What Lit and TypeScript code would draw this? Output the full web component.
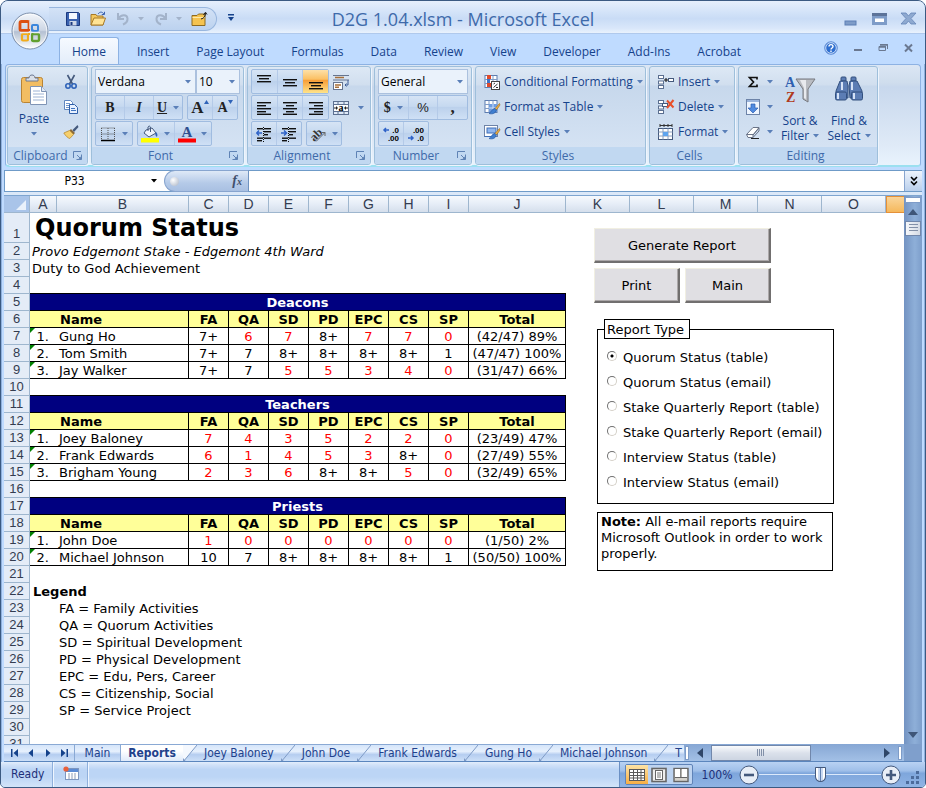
import { LitElement, html, svg, css, nothing, TemplateResult } from "lit";
import { customElement, property, state } from "lit/decorators.js";
import { classMap } from "lit/directives/class-map.js";

/* ---------- icons ---------- */

const lines = (rows: [number, number, number][]) =>
  rows.map(([x, y, w]) => svg`<rect x=${x} y=${y} width=${w} height="1.4" fill="#111"/>`);

const grid = svg`<rect x="1" y="1.500" width="12" height="12" fill="#fff" stroke="#5d7db0"/><path d="M1 5.500h12M1 9.500h12M5 1.500v12M9 1.500v12" stroke="#7f9bc6" fill="none"/>`;
const brush = svg`<path d="M15.500 4.500l-4.500 5 1.500 1.500 3.500-5z" fill="#f0b040" stroke="#9a6a20" stroke-width=".6"/><path d="M11 9.500c-3 0-3 3-6 5 3 1 6.500 0 7.500-3.500z" fill="#3f7fd0" stroke="#1f4f9a" stroke-width=".6"/>`;
const cellStack = svg`<rect x=".5" y="1.500" width="5" height="3" fill="#fff" stroke="#5b6f90"/><rect x=".5" y="7" width="5" height="3" fill="#fff" stroke="#5b6f90"/><rect x=".5" y="11.500" width="5" height="3" fill="#fff" stroke="#5b6f90"/>`;

const ICONS: Record<string, TemplateResult<2>> = {
  save: svg`<path d="M1.500 1.500h12l1 1v12h-13z" fill="#3a62b0" stroke="#1c3a80"/><rect x="4" y="2" width="8" height="6" fill="#f4f8ff"/><rect x="4.500" y="10" width="7" height="4.500" fill="#cfd8e8"/><rect x="5.500" y="11" width="2" height="3" fill="#1c3a80"/>`,
  open: svg`<path d="M1 3.500h5l1 1.500h6v9H1z" fill="#f3c860" stroke="#a87a28"/><path d="M1 14l3-7h11.500L13 14z" fill="#ffe394" stroke="#a87a28"/><path d="M8 3c2-2.500 4-2.500 6 0M14.500 .8V3.500H11.800" stroke="#3a62b0" fill="none"/>`,
  undo: svg`<path d="M3 2v6h6M3.500 7.500C6 3.500 12 3 12.500 7.500c.2 3-2 5-4.500 6" stroke="#a3b3ca" stroke-width="2" fill="none"/>`,
  redo: svg`<path d="M13 2v6H7M12.500 7.500C10 3.500 4 3 3.500 7.500c-.2 3 2 5 4.500 6" stroke="#a3b3ca" stroke-width="2" fill="none"/>`,
  folder: svg`<path d="M1 4.500h5l1.500-1.500H14v11.500H1z" fill="#f5c350" stroke="#8d6a20"/><path d="M1.500 6.500h12" stroke="#fde9a8"/><path d="M10 8c3-.5 4.500-3 4.500-6M12.500 4L14.500 1.200 16 3.500" stroke="#222" fill="none"/>`,
  cut: svg`<path d="M4.500 1l5 9M11.500 1l-5 9" stroke="#44597c" stroke-width="1.600"/><circle cx="5" cy="12" r="2.200" fill="none" stroke="#2f63b8" stroke-width="1.600"/><circle cx="11" cy="12" r="2.200" fill="none" stroke="#2f63b8" stroke-width="1.600"/>`,
  copy: svg`<path d="M1.500 1.500h6l2 2v7h-8z" fill="#fff" stroke="#5f86c0"/><path d="M3 4.500h4M3 6.500h4M3 8.500h3" stroke="#6f95cc"/><path d="M6.500 5.500h5l3 3v6h-8z" fill="#e8f1ff" stroke="#2f5fa8"/><path d="M8 9.500h4M8 11.500h5" stroke="#3f74c0"/>`,
  painter: svg`<path d="M14.500 1L9.500 6l1.500 2 4.500-5z" fill="#44597c"/><path d="M8 5l4 4-1.500 1.500-4-4z" fill="#8a6a3a"/><path d="M6.500 6.500L.8 9c2 3 4 5 6 5.500l3.700-4z" fill="#f6cf6c" stroke="#b98a30" stroke-width=".8"/>`,
  borders: svg`<path d="M1.500 2v12M8 2v12M14.500 2v12M1.500 2h13M1.500 8h13" stroke="#555" stroke-dasharray="1 1" fill="none"/><path d="M1 14.500h14" stroke="#000" stroke-width="1.600"/>`,
  fill: svg`<path d="M4 4l6-2 4 5-7 4-5-4z" fill="#eef3fb" stroke="#44597c"/><path d="M6 5V1c1-1.500 2.500-1 2.500 1V6" stroke="#44597c" fill="none"/><path d="M14 6c2 2 1.500 4 .8 5-1.800-1.500-1.800-3.500-.8-5" fill="#2f63b8"/><rect x="-1" y="12" width="18" height="4.500" fill="#ff0"/>`,
  fontcolor: svg`<text x="8" y="10.500" text-anchor="middle" font-family="Liberation Serif" font-weight="bold" font-size="15" fill="#2f4f8f">A</text><rect x="-1" y="12.500" width="18" height="4" fill="#f00"/>`,
  top: svg`${lines([[1, 1, 14], [3, 4, 10], [1, 7, 14]])}`,
  middle: svg`${lines([[1, 5, 14], [3, 8, 10], [1, 11, 14]])}`,
  bottom: svg`${lines([[1, 8, 14], [3, 11, 10], [1, 14, 14]])}`,
  left: svg`${lines([[1, 2, 14], [1, 5, 9], [1, 8, 14], [1, 11, 9], [1, 13.600, 14]])}`,
  center: svg`${lines([[1, 2, 14], [4, 5, 8], [1, 8, 14], [4, 11, 8], [1, 13.600, 14]])}`,
  right: svg`${lines([[1, 2, 14], [6, 5, 9], [1, 8, 14], [6, 11, 9], [1, 13.600, 14]])}`,
  outdent: svg`${lines([[1, 2, 6], [8, 2, 7], [8, 5, 7], [8, 8, 4], [1, 11.500, 6], [8, 11.500, 7], [1, 14, 5]])}<path d="M7.500 1v15" stroke="#111" stroke-dasharray="1 1"/><path d="M6 7H1M3 4.500L.8 7 3 9.500" stroke="#2f63c8" stroke-width="1.500" fill="none"/>`,
  indent: svg`${lines([[1, 2, 6], [8, 2, 7], [8, 5, 7], [8, 8, 4], [1, 11.500, 6], [8, 11.500, 7], [1, 14, 5]])}<path d="M7.500 1v15" stroke="#111" stroke-dasharray="1 1"/><path d="M0 7h5M3 4.500L5.500 7 3 9.500" stroke="#2f63c8" stroke-width="1.500" fill="none"/>`,
  wrap: svg`<path d="M0 1.500h16" stroke="#66758f"/><path d="M2 3.500h9" stroke="#a8703a" stroke-width="1.400"/><path d="M0 6h16" stroke="#66758f"/><rect x=".5" y="8.500" width="9" height="7" fill="#fff" stroke="#66758f"/><path d="M2 11h6M2 13.300h4" stroke="#a8703a" stroke-width="1.400"/><path d="M15 6v5h-3M13.500 9.500L12 11l1.500 1.500" stroke="#3f5f98" fill="none"/>`,
  merge: svg`<rect x=".5" y="1.500" width="15" height="13" fill="#dfeaf8" stroke="#5d7090"/><path d="M1 4.500h14M1 11.500h14M5 1.500v3M11 1.500v3M5 11.500v3M11 11.500v3" stroke="#5d7090"/><rect x="1" y="5" width="14" height="6" fill="#fff"/><text x="8" y="10.500" text-anchor="middle" font-family="Liberation Serif" font-weight="bold" font-size="10">a</text><path d="M1 8h4M11 8h4M3.500 6.500v3M12.500 6.500v3" stroke="#222"/>`,
  orient: svg`<text x="0" y="12" transform="rotate(-45 7 9)" font-family="Liberation Serif" font-weight="bold" font-size="12" fill="#333">ab</text><path d="M6 15.500l9-9M11.500 6.500H15V10" stroke="#666" fill="none"/>`,
  incdec: svg`<path d="M6 4H1M3 2L1 4l2 2" stroke="#2f63c8" stroke-width="1.500" fill="none"/><text x="16" y="7" text-anchor="end" font-family="Liberation Sans" font-weight="bold" font-size="8">.0</text><text x="16" y="15" text-anchor="end" font-family="Liberation Sans" font-weight="bold" font-size="8">.00</text>`,
  decdec: svg`<path d="M0 12h5M3 10l2 2-2 2" stroke="#2f63c8" stroke-width="1.500" fill="none"/><text x="16" y="7" text-anchor="end" font-family="Liberation Sans" font-weight="bold" font-size="8">.00</text><text x="16" y="15" text-anchor="end" font-family="Liberation Sans" font-weight="bold" font-size="8">.0</text>`,
  conditional: svg`${grid}<rect x="3" y="1" width="4" height="4" fill="#e04a2a"/><rect x="3" y="5" width="3" height="4" fill="#3f74c8"/><rect x="3" y="9" width="5" height="4" fill="#e04a2a"/><rect x="7.500" y="7.500" width="8" height="8" fill="#fff" stroke="#444"/><path d="M9.500 10l1.500-1M9.500 13.500l4-3.500M12 13.500h2" stroke="#333"/>`,
  astable: svg`${grid}<rect x="5" y="5" width="8" height="8" fill="#6f9de0"/><path d="M9 5v8M5 9h8" stroke="#cfe0fa"/>${brush}`,
  cellstyles: svg`<rect x=".5" y="1.500" width="13" height="11" fill="#fff" stroke="#6d83a8"/><rect x="3" y="4" width="9" height="5" fill="#8fb6ee" stroke="#3f6fb8"/><path d="M.5 12.500h6" stroke="#3f6fb8"/>${brush}`,
  insertcells: svg`${cellStack}<path d="M6 6h4M8 4v4" stroke="#111"/><rect x="10.500" y="4.500" width="5" height="3" fill="#fff" stroke="#44597c"/>`,
  deletecells: svg`${cellStack}<rect x="4.500" y="4.500" width="5" height="3" fill="#fff" stroke="#44597c"/><path d="M9 1.500l6.500 7M15.500 1l-6.500 8" stroke="#e8502a" stroke-width="2"/>`,
  formatcells: svg`<path d="M2 1.500h12M2 0v3M6 0v3M10 0v3M14 0v3" stroke="#333" fill="none"/><rect x=".5" y="4.500" width="14" height="11" fill="#fff" stroke="#44597c"/><path d="M.5 8h14M.5 12h14M5 4.500v11M10 4.500v11" stroke="#8ba0c0"/><rect x="5" y="8" width="5" height="4" fill="#5fa4ee"/>`,
  sum: svg`<path d="M12 5.500V3.500H4.500L8.500 8l-4 4.500H12v-2" stroke="#111" stroke-width="1.700" fill="none"/>`,
  filldown: svg`<rect x="1.500" y=".5" width="13" height="15" fill="#eef5ff" stroke="#6d83a8"/><rect x="2" y="1" width="12" height="2" fill="#9ab4dc"/><path d="M6 5h4v4h3l-5 5-5-5h3z" fill="#4f8ae0" stroke="#2f5fb0" stroke-width=".7"/>`,
  clear: svg`<path d="M1.500 10.500L8 3.500h6l-6 7.500v2.500H3z" fill="#fff" stroke="#6a7488"/><path d="M8 11l6-7v3l-6 6.500M1.500 10.500H8" stroke="#6a7488" fill="none"/><path d="M6 14.500h8" stroke="#222"/>`,
  macro: svg`<rect x="2.500" y="2.500" width="13" height="11" fill="#fff" stroke="#7d96bf"/><rect x="3" y="3" width="12" height="3" fill="#5b8bd4"/><path d="M5 8h9M5 10h9M5 12h9" stroke="#8f9db5" stroke-dasharray="2 1"/><circle cx="3" cy="3" r="2.600" fill="#e8603a"/>`,
  normal: svg`<rect x=".5" y="2.500" width="15" height="11" fill="#fff" stroke="#5a5a5a"/><path d="M.5 5.500h15M.5 8.500h15M.5 11h15M4.500 2.500v11M8.500 2.500v11M12 2.500v11" stroke="#5a5a5a"/>`,
  pagelayout: svg`<rect x="1" y="1.500" width="14" height="13" fill="#eee" stroke="#666" stroke-width="1.600"/><rect x="4.500" y="3.500" width="7" height="9" fill="#fff" stroke="#666"/><path d="M6 6h4M6 8h4M6 10h4" stroke="#777"/>`,
  pagebreak: svg`<rect x="1" y="1.500" width="14" height="13" fill="#d5d2cc" stroke="#666" stroke-width="1.400"/><rect x="2" y="2" width="5" height="8" fill="#fff"/><rect x="9" y="2" width="5" height="8" fill="#fff"/><path d="M7.800 2v8.500M2 10.500h12" stroke="#666"/>`,
};

const icon = (name: string) => html`<svg class="ic" viewBox="0 0 16 16" aria-hidden="true">${ICONS[name]}</svg>`;
const arrow = html`<svg class="dn" viewBox="0 0 6 4" aria-hidden="true"><path d="M0 0h6L3 3.500z"/></svg>`;

/* ---------- sheet data ---------- */

interface Section { title: string; people: string[][] }

/* A trailing "*" marks a score shown in red. */
const SECTIONS: Section[] = [
  { title: "Deacons", people: [
    ["Gung Ho", "7+", "6*", "7*", "8+", "7*", "7*", "0*", "(42/47) 89%"],
    ["Tom Smith", "7+", "7", "8+", "8+", "8+", "8+", "1", "(47/47) 100%"],
    ["Jay Walker", "7+", "7", "5*", "5*", "3*", "4*", "0*", "(31/47) 66%"],
  ] },
  { title: "Teachers", people: [
    ["Joey Baloney", "7*", "4*", "3*", "5*", "2*", "2*", "0*", "(23/49) 47%"],
    ["Frank Edwards", "6*", "1*", "4*", "5*", "3*", "8+", "0*", "(27/49) 55%"],
    ["Brigham Young", "2*", "3*", "6*", "8+", "8+", "5*", "0*", "(32/49) 65%"],
  ] },
  { title: "Priests", people: [
    ["John Doe", "1*", "0*", "0*", "0*", "0*", "0*", "0*", "(1/50) 2%"],
    ["Michael Johnson", "10", "7", "8+", "8+", "8+", "8+", "1", "(50/50) 100%"],
  ] },
];
const SCORE_HEADS = ["FA", "QA", "SD", "PD", "EPC", "CS", "SP", "Total"];
const LEGEND = [
  "FA = Family Activities",
  "QA = Quorum Activities",
  "SD = Spiritual Development",
  "PD = Physical Development",
  "EPC = Edu, Pers, Career",
  "CS = Citizenship, Social",
  "SP = Service Project",
];
const COLUMNS = "ABCDEFGHIJKLMNO".split("");
const RIBBON_TABS = ["Home", "Insert", "Page Layout", "Formulas", "Data", "Review", "View", "Developer", "Add-Ins", "Acrobat"];
const SHEETS = ["Main", "Reports", "Joey Baloney", "John Doe", "Frank Edwards", "Gung Ho", "Michael Johnson", "T"];
const REPORT_TYPES = [
  "Quorum Status (table)",
  "Quorum Status (email)",
  "Stake Quarterly Report (table)",
  "Stake Quarterly Report (email)",
  "Interview Status (table)",
  "Interview Status (email)",
];

const reset = css`
  *, *::before, *::after { box-sizing: border-box; }
  button, input, select { font: inherit; color: inherit; margin: 0; border: 0; padding: 0; background: none; border-radius: 0; }
  .ic { width: 16px; height: 16px; display: block; flex: none; overflow: visible; }
  .dn { width: 6px; height: 4px; fill: #5a7fb8; flex: none; }
`;

/* ---------- title bar and tabs ---------- */

@customElement("xl-title")
export class XlTitle extends LitElement {
  static styles = [reset, css`
    :host { display: block; position: relative; font-family: "Open Sans", "Noto Sans", sans-serif; color: #15428b; }
    .title { display: grid; grid-template-columns: 1fr auto 1fr; align-items: center; height: 33px; padding: 0 3px;
      background: linear-gradient(#e6effc 0, #d6e5f9 30%, #c9dcf6 55%, #d9e7fa 85%, #e9f2fd 100%); border-radius: 7px 7px 0 0; border-bottom: 1px solid #b0c9ec; }
    .left { display: flex; align-items: center; gap: 10px; padding-left: 45px; }
    .qat { display: flex; align-items: center; gap: 9px; height: 24px; width: 168px; padding: 0 13px 0 16px; background: linear-gradient(#d3e2f6, #bcd2ef);
      border: 1px solid #98b6de; border-left: 0; border-radius: 0 12px 12px 0; margin-top: 4px; }
    .qat button { display: flex; align-items: center; gap: 7px; }
    .qat .dn { fill: #a3b3ca; }
    .more { width: 8px; height: 9px; display: block; }
    h1 { margin: 4px 0 0; font-size: 18px; line-height: 22px; font-weight: 400; color: #3e6aaa; white-space: nowrap; }
    .ctl { display: flex; justify-content: flex-end; gap: 12px; padding: 3px 5px 0 0; }
    .ctl svg { width: 17px; height: 15px; display: block; }
    .tabs { display: flex; align-items: flex-end; height: 30px; padding-left: 58px; background: #bfdbff; font-size: 12px; line-height: 16px; }
    .tabs > button { height: 26px; padding: 2px 13px 0 14px; white-space: nowrap; }
    .tabs > .on { padding: 2px 12px 0; margin: 0 4px 0 0; background: linear-gradient(#f6faff, #e3edfa); border: 1px solid #8db2e3; border-bottom: 0; border-radius: 3px 3px 0 0; height: 27px; }
    .win { margin-left: auto; display: flex; align-items: center; gap: 16px; padding: 0 12px 9px 0; }
    .win svg { display: block; }
    .orb { position: absolute; left: 10px; top: 11px; width: 38px; height: 38px; }
    .orb svg { width: 38px; height: 38px; display: block; }
  `];
  render() {
    return html`
      <header class="title">
        <div class="left">
          <div class="qat">
            <button aria-label="Save">${icon("save")}</button>
            <button aria-label="Open">${icon("open")}</button>
            <button aria-label="Undo">${icon("undo")}${arrow}</button>
            <button aria-label="Redo">${icon("redo")}${arrow}</button>
            <button aria-label="Open folder">${icon("folder")}</button>
          </div>
          <button aria-label="Customize toolbar"><svg class="more" viewBox="0 0 8 9"><path d="M1 1h6v1.500H1zM1 4h6L4 8z" fill="#15428b"/></svg></button>
        </div>
        <h1>D2G 1.04.xlsm - Microsoft Excel</h1>
        <div class="ctl">
          <button aria-label="Minimize"><svg viewBox="0 0 17 15"><rect x="3" y="10" width="11" height="4" fill="#7e9cc8" stroke="#5c7fb5"/></svg></button>
          <button aria-label="Maximize"><svg viewBox="0 0 17 15"><path d="M1 2h15v12H1z" fill="#7e9cc8"/><path d="M1 2h15v3H1z" fill="#5c7399"/><rect x="4" y="7.500" width="9" height="3.500" fill="#fff"/></svg></button>
          <button aria-label="Close"><svg viewBox="0 0 17 15"><path d="M1 2h5l2.500 3L11 2h5l-5 5.500 5 5.500h-5L8.500 10 6 13H1l5-5.500z" fill="#8ea9d0" stroke="#6685b8" stroke-width=".8"/></svg></button>
        </div>
      </header>
      <nav class="tabs">
        ${RIBBON_TABS.map((t, i) => html`<button class=${classMap({ on: i === 0 })}>${t}</button>`)}
        <div class="win">
          <button aria-label="Help"><svg width="14" height="14" viewBox="0 0 14 14"><circle cx="7" cy="7" r="6.300" fill="#2f6fd0" stroke="#6c95d8"/><circle cx="7" cy="7" r="5.300" fill="none" stroke="#cfe0f8"/><path d="M5 5.500c0-2.500 4-2.500 4 0 0 1.500-2 1.500-2 3M7 9.500v1.400" stroke="#fff" stroke-width="1.400" fill="none"/></svg></button>
          <button aria-label="Minimize workbook"><svg width="8" height="10" viewBox="0 0 8 10"><rect y="6" width="8" height="2" fill="#6a7890"/></svg></button>
          <button aria-label="Restore workbook"><svg width="10" height="10" viewBox="0 0 10 10"><path d="M2 1.500h7.500v4.500M1 3.500h6.500v4H1z" stroke="#6a7890" fill="none"/><path d="M1 4h7M2 2h8" stroke="#6a7890" stroke-width="1.500"/></svg></button>
          <button aria-label="Close workbook"><svg width="9" height="10" viewBox="0 0 9 10"><path d="M1 1.500l7 7M8 1.500l-7 7" stroke="#6a7890" stroke-width="2"/></svg></button>
        </div>
      </nav>
      <button class="orb" aria-label="Office menu">
        <svg viewBox="0 0 38 38">
          <defs><linearGradient id="o" x2="0" y2="1"><stop offset="0" stop-color="#f4f7fb"/><stop offset=".48" stop-color="#cdd6e4"/><stop offset=".52" stop-color="#b4c0d2"/><stop offset="1" stop-color="#fff"/></linearGradient></defs>
          <circle cx="19" cy="19" r="18" fill="url(#o)" stroke="#7b8eaa"/><circle cx="19" cy="19" r="16.800" fill="none" stroke="#fff" stroke-opacity=".7"/>
          <rect x="9" y="9.500" width="9" height="9" rx="1.500" fill="none" stroke="#dc5010" stroke-width="2.800"/>
          <rect x="21" y="13" width="6" height="6" rx="1" fill="none" stroke="#3c86dc" stroke-width="2"/>
          <rect x="11" y="22" width="6" height="6.500" rx="1" fill="none" stroke="#f2ac1c" stroke-width="2.200"/>
          <rect x="21" y="22" width="7" height="7" rx="1.500" fill="none" stroke="#62a030" stroke-width="2.400"/>
          <path d="M19 9v20M9 20.500h20" stroke="#e8edf4" stroke-width="1.400"/>
          <rect x="17" y="17" width="2" height="2" fill="#dc5010"/><rect x="20.500" y="17" width="2" height="2" fill="#3c86dc"/><rect x="17" y="21" width="2" height="2" fill="#f2ac1c"/><rect x="20.500" y="21" width="2" height="2" fill="#62a030"/>
        </svg>
      </button>`;
  }
}

/* ---------- ribbon ---------- */

@customElement("xl-ribbon")
export class XlRibbon extends LitElement {
  static styles = [reset, css`
    :host { display: block; padding: 0 1px; font: 12px/16px "Open Sans", "Noto Sans", sans-serif; color: #15428b; }
    .panel { display: flex; gap: 3px; padding: 1px 1px 0; height: 103px; border: 1px solid #8db2e3; border-bottom: 2px solid #9be0f0; border-radius: 4px;
      background: linear-gradient(#dbe6f4 0, #cfdded 18%, #c8d8ed 22%, #dfeaf7 80%, #e9f3fd 100%); }
    .group { display: flex; flex-direction: column; height: 99px; border: 1px solid #9ebfdb; border-radius: 3px; box-shadow: 1px 1px 0 #eef5fd; background: linear-gradient(#dde8f5 0, #d1dfef 18%, #c7d8ec 20%, #d8e5f5 100%); overflow: hidden; flex: none; }
    .body { height: 80px; padding: 2px 3px 0; }
    .cap { display: flex; align-items: center; height: 17px; padding-right: 5px; background: #c1d8f1; color: #3e6aaa; }
    .cap span { flex: 1; text-align: center; }
    .cap svg { width: 9px; height: 9px; display: block; }
    .clipboard { width: 81px; } .font { width: 153px; } .align { width: 124px; } .number { width: 98px; }
    .styles { width: 171px; } .cells { width: 86px; } .editing { width: 140px; }
    .rows { display: grid; grid-template-rows: repeat(3, 25px); gap: 1px; }
    .rows.snug { gap: 0; }
    .row { display: flex; gap: 4px; align-items: stretch; }
    .combo { position: relative; display: flex; flex: 1; color: #000; }
    .combo select { appearance: none; width: 100%; padding: 0 0 0 2px; background: #eaf2fb; border: 1px solid #abc1de; }
    .combo .dn { position: absolute; right: 5px; top: 11px; pointer-events: none; }
    .row.tight { gap: 0; }
    .combo.size { flex: 0 0 44px; }
    .bar { display: flex; border: 1px solid #a0bce0; border-radius: 2px; background: linear-gradient(#d6e4f5, #c6d9f0 45%, #bcd1ec 50%, #cfe0f5); }
    .bar button { display: flex; flex: 1; align-items: center; justify-content: center; gap: 6px; border-left: 1px solid #b4cae8; }
    .bar button:first-child { border-left: 0; }
    .bar .on { background: linear-gradient(#fde0a8 0, #fbc063 40%, #f79e38 45%, #fee38a 100%); }
    .plain { display: flex; align-items: center; justify-content: center; gap: 9px; white-space: nowrap; }
    .g { font: bold 14px/16px "Liberation Serif", serif; color: #222; }
    .g.i { font-style: italic; } .g.u { text-decoration: underline; }
    .g.big { font-size: 17px; } .g.sm { font-size: 14px; } .g.pc { font: 13px/16px "Liberation Sans", sans-serif; }
    .grow { display: flex; }
    .grow svg { width: 5px; height: 4px; fill: #2f63b8; }
    .w51 { width: 51px; } .w88 { width: 88px; } .w38 { width: 38px; } .w75 { width: 75px; } .w78 { width: 78px; } .w36 { width: 36px; } .fill { flex: 1; }
    .clip { display: grid; grid-template-columns: 46px 1fr; }
    .paste { display: flex; flex-direction: column; align-items: center; gap: 5px; padding-top: 5px; }
    .paste svg.p { width: 28px; height: 32px; display: block; }
    .list { justify-items: start; }
    .list .plain { gap: 4px; padding-left: 5px; }
    .edit { display: grid; grid-template-columns: 34px 48px 1fr; }
    .edit .plain { gap: 6px; }
    .tall { display: flex; flex-direction: column; align-items: center; gap: 7px; padding-top: 5px; line-height: 15px; white-space: nowrap; }
    .tall svg.p { width: 32px; height: 32px; display: block; }
    .tall .dn { margin-left: 4px; vertical-align: 2px; }
  `];
  private group(cls: string, label: string, body: TemplateResult, launcher = false) {
    return html`<section class="group ${cls}"><div class="body">${body}</div>
      <div class="cap"><span>${label}</span>${launcher ? html`<svg viewBox="0 0 9 9"><path d="M.5 7V.5H8M3.500 8.500h5v-5M4 4l3 3" stroke="#5f83b5" fill="none"/><path d="M5 8.500h3.500V5z" fill="#5f83b5"/></svg>` : nothing}</div></section>`;
  }
  private bar(cls: string, items: [string, unknown, boolean?][]) {
    return html`<div class="bar ${cls}">${items.map(([l, c, on]) => html`<button aria-label=${l} class=${classMap({ on: !!on })}>${c}</button>`)}</div>`;
  }
  private item(name: string, label: string) {
    return html`<button class="plain">${icon(name)}<span>${label}</span>${arrow}</button>`;
  }
  render() {
    const up = html`<svg viewBox="0 0 5 4"><path d="M0 4h5L2.500 0z"/></svg>`;
    const down = html`<svg viewBox="0 0 5 4"><path d="M0 0h5L2.500 4z"/></svg>`;
    return html`<div class="panel">
      ${this.group("clipboard", "Clipboard", html`<div class="clip">
          <button class="paste"><svg class="p" viewBox="0 0 28 32"><rect x="1.500" y="3.500" width="21" height="25" rx="2" fill="#f2bd62" stroke="#b98434"/><path d="M6 7V4h3c0-4 6-4 6 0h3v3z" fill="#d9dfe8" stroke="#6d7890"/><path d="M10.500 12.500h11l5 5v13h-16z" fill="#fff" stroke="#7f94b5"/><path d="M13 17h7M13 20h11M13 23h11M13 26h11" stroke="#9db3d4"/><path d="M21.500 12.500v5h5" fill="#dfe8f5" stroke="#7f94b5"/></svg><span>Paste</span>${arrow}</button>
          <div class="rows snug"><button class="plain" aria-label="Cut">${icon("cut")}</button><button class="plain" aria-label="Copy">${icon("copy")}</button><button class="plain" aria-label="Format painter">${icon("painter")}</button></div>
        </div>`, true)}
      ${this.group("font", "Font", html`<div class="rows">
          <div class="row tight"><label class="combo"><select aria-label="Font"><option>Verdana</option></select>${arrow}</label>
            <label class="combo size"><select aria-label="Font size"><option>10</option></select>${arrow}</label></div>
          <div class="row">${this.bar("w88", [["Bold", html`<span class="g">B</span>`], ["Italic", html`<span class="g i">I</span>`], ["Underline", html`<span class="g u">U</span>${arrow}`]])}
            ${this.bar("w51", [["Grow font", html`<span class="grow"><span class="g big">A</span>${up}</span>`], ["Shrink font", html`<span class="grow"><span class="g sm">A</span>${down}</span>`]])}</div>
          <div class="row">${this.bar("w38", [["Borders", html`${icon("borders")}${arrow}`]])}
            ${this.bar("w75", [["Fill color", html`${icon("fill")}${arrow}`], ["Font color", html`${icon("fontcolor")}${arrow}`]])}</div>
        </div>`, true)}
      ${this.group("align", "Alignment", html`<div class="rows">
          <div class="row">${this.bar("w78", [["Top", icon("top")], ["Middle", icon("middle")], ["Bottom", icon("bottom"), true]])}<button class="plain" aria-label="Wrap text">${icon("wrap")}</button></div>
          <div class="row">${this.bar("w78", [["Left", icon("left")], ["Center", icon("center")], ["Right", icon("right")]])}<button class="plain" aria-label="Merge">${icon("merge")}${arrow}</button></div>
          <div class="row">${this.bar("w51", [["Decrease indent", icon("outdent")], ["Increase indent", icon("indent")]])}${this.bar("w36", [["Orientation", html`${icon("orient")}${arrow}`]])}</div>
        </div>`, true)}
      ${this.group("number", "Number", html`<div class="rows">
          <div class="row"><label class="combo"><select aria-label="Number format"><option>General</option></select>${arrow}</label></div>
          <div class="row">${this.bar("fill", [["Currency", html`<span class="g">$</span>${arrow}`], ["Percent", html`<span class="g pc">%</span>`], ["Comma", html`<span class="g big">,</span>`]])}</div>
          <div class="row">${this.bar("w51", [["Increase decimal", icon("incdec")], ["Decrease decimal", icon("decdec")]])}</div>
        </div>`, true)}
      ${this.group("styles", "Styles", html`<div class="rows snug list">${this.item("conditional", "Conditional Formatting")}${this.item("astable", "Format as Table")}${this.item("cellstyles", "Cell Styles")}</div>`)}
      ${this.group("cells", "Cells", html`<div class="rows snug list">${this.item("insertcells", "Insert")}${this.item("deletecells", "Delete")}${this.item("formatcells", "Format")}</div>`)}
      ${this.group("editing", "Editing", html`<div class="edit">
          <div class="rows snug"><button class="plain" aria-label="Sum">${icon("sum")}${arrow}</button><button class="plain" aria-label="Fill">${icon("filldown")}${arrow}</button><button class="plain" aria-label="Clear">${icon("clear")}${arrow}</button></div>
          <button class="tall"><svg class="p" viewBox="0 0 32 32"><path d="M12 5h19l-7 10v13l-5-3V15z" fill="#b9bcc2" stroke="#77797f"/><path d="M16 6h6v19l-2-1V14z" fill="#e8eaee"/><text x="1" y="13" font-family="Liberation Serif" font-weight="bold" font-size="14" fill="#2f5fb0">A</text><text x="2" y="28" font-family="Liberation Serif" font-weight="bold" font-size="14" fill="#b03a20">Z</text></svg><span>Sort &amp;<br>Filter${arrow}</span></button>
          <button class="tall"><svg class="p" viewBox="0 0 32 32"><g fill="#5c7db4" stroke="#33507f"><rect x="8" y="3" width="5" height="4" rx="1"/><rect x="18" y="3" width="5" height="4" rx="1"/><path d="M7 7h7l1 5v12H3V17z"/><path d="M17 7h7l5 10v7H17l-1-12z"/><rect x="2.500" y="18" width="11" height="8" rx="1.500"/><rect x="18.500" y="18" width="11" height="8" rx="1.500"/></g><path d="M5 19v6M21 19v6M9 8v8M19 8v8" stroke="#d5e2f6" stroke-width="2"/></svg><span>Find &amp;<br>Select${arrow}</span></button>
        </div>`)}
    </div>`;
  }
}

/* ---------- worksheet ---------- */

@customElement("xl-sheet")
export class XlSheet extends LitElement {
  static styles = [reset, css`
    :host { display: block; position: relative; overflow: hidden; background: #fff; font: 13px/16px "DejaVu Sans", sans-serif; color: #000; }
    table { width: 100%; table-layout: fixed; border-collapse: separate; border-spacing: 0; }
    .c0 { width: 26px; } .c1 { width: 27px; } .c2 { width: 132px; } .c3 { width: 40px; } .c10 { width: 97px; } .c11 { width: 64px; }
    tr { height: 17px; }
    .tall { height: 30px; }
    th, td { padding: 0; height: 17px; white-space: nowrap; font-weight: 400; text-align: left; }
    td { line-height: 14px; padding-top: 2px; }
    thead th, tbody th { font-family: "Liberation Sans", sans-serif; text-align: center; color: #333c50; background: #e4ecf7; border-right: 1px solid #9eb6ce; border-bottom: 1px solid #9eb6ce; }
    thead th { font-size: 14px; background: linear-gradient(#f6f9fd, #e6edf7 50%, #d5dfec); }
    tbody th { font-size: 13px; vertical-align: bottom; }
    thead .corner { background: #a9c4e9; text-align: right; }
    .corner svg { width: 10px; height: 10px; display: inline-block; margin: 0 3px 0 0; vertical-align: -1px; }
    thead .sel { background: linear-gradient(#fad59a, #f5b85c); border: 1px solid #e59038; border-right: 0; }
    td { border-bottom: 1px solid transparent; }
    .ruled td { border-bottom-color: #000; }
    .edge > td { border-bottom-color: #000; }
    .edge > td.off, .ruled td.off { border-bottom-color: transparent; }
    .h1 { font-size: 24px; line-height: 27px; font-weight: 700; padding-left: 5px; }
    .txt { padding-left: 2px; }
    .ital { font-style: italic; }
    .strong { font-weight: 700; padding-left: 3px; }
    .navy { background: #000080; color: #fff; font-weight: 700; text-align: center; border-right: 1px solid #000; }
    .yel td.y { background: #ffff99; font-weight: 700; }
    .yel .y, .s { border-right: 1px solid #000; text-align: center; }
    .yel .first { border-right: 0; }
    .yel .name { text-align: left; padding-left: 3px; }
    .name { border-right: 1px solid #000; padding-left: 2px; }
    .num { position: relative; text-align: right; padding-right: 8px; }
    .num::before { content: ""; position: absolute; left: 0; top: 0; border-top: 5px solid #008000; border-right: 5px solid transparent; }
    .red { color: #f00; }

    /* form controls float over the cells, anchored at column K */
    .form { position: absolute; left: 590px; top: 32px; width: 240px; }
    .btns { display: grid; grid-template-columns: 86px 86px; gap: 5px; }
    .btns button { height: 35px; background: #e0dfe3; border-style: solid; border-width: 1px 2px 2px 1px; border-color: #f1efe2 #716f6f #716f6f #f1efe2; box-shadow: inset -1px -1px 0 #aca8a9; padding-top: 2px; }
    .btns .wide { grid-column: 1 / -1; }
    fieldset { min-width: 0; margin: 16px 0 0 3px; padding: 6px 0 8px 9px; border: 1px solid #000; width: 237px; }
    legend { margin-left: -3px; padding: 2px 5px 0 2px; border: 1px solid #000; background: #fff; }
    .opt { display: flex; align-items: center; gap: 6px; height: 25px; white-space: nowrap; }
    .opt input { appearance: none; width: 10px; height: 10px; margin-bottom: 4px; border-radius: 50%; border: 1px solid; border-color: #707070 #d4d0c8 #d4d0c8 #707070; background: #fff; flex: none; }
    .opt input:checked { background: radial-gradient(circle, #000 0 1px, #fff 2px); }
    .note { margin: 8px 0 0 3px; width: 236px; height: 59px; padding: 1px 0 0 3px; border: 1px solid #000; background: #fff; white-space: nowrap; }
  `];
  @state() private report = 0;

  render() {
    const rows: TemplateResult[] = [];
    let n = 0;
    const row = (cells: unknown, cls = "") => {
      n += 1;
      rows.push(html`<tr class=${cls}><th scope="row">${n}</th>${cells}</tr>`);
    };
    const rest = html`<td class="off" colspan="6"></td>`;
    const empty = html`<td colspan="16"></td>`;
    row(html`<td class="h1" colspan="16">Quorum Status</td>`, "tall");
    row(html`<td class="txt ital" colspan="16">Provo Edgemont Stake - Edgemont 4th Ward</td>`);
    row(html`<td class="txt" colspan="16">Duty to God Achievement</td>`);
    for (const s of SECTIONS) {
      row(html`<td colspan="10"></td>${rest}`, "edge");
      row(html`<td class="navy" colspan="10">${s.title}</td>${rest}`, "ruled");
      row(html`<td class="y first"></td><td class="y name">Name</td>${SCORE_HEADS.map((h) => html`<td class="y">${h}</td>`)}${rest}`, "ruled yel");
      s.people.forEach(([name, ...scores], i) =>
        row(html`<td class="num">${i + 1}.</td><td class="name">${name}</td>${scores.map((v) => html`<td class=${classMap({ s: true, red: v.endsWith("*") })}>${v.replace("*", "")}</td>`)}${rest}`, "ruled"));
    }
    row(empty);
    row(html`<td class="strong" colspan="16">Legend</td>`);
    LEGEND.forEach((l) => row(html`<td></td><td class="txt" colspan="15">${l}</td>`));
    row(empty);
    row(empty);

    return html`
      <table>
        <colgroup><col class="c0"><col class="c1"><col class="c2">${Array.from({ length: 7 }, () => html`<col class="c3">`)}<col class="c10">${Array.from({ length: 5 }, () => html`<col class="c11">`)}<col></colgroup>
        <thead><tr><th class="corner"><svg viewBox="0 0 10 10"><path d="M10 0v10H0z" fill="#e9f1fb"/></svg></th>${COLUMNS.map((c) => html`<th scope="col">${c}</th>`)}<th class="sel"></th></tr></thead>
        <tbody>${rows}</tbody>
      </table>
      <div class="form">
        <div class="btns"><button class="wide">Generate Report</button><button>Print</button><button>Main</button></div>
        <fieldset><legend>Report Type</legend>
          ${REPORT_TYPES.map((t, i) => html`<label class="opt"><input type="radio" name="report" .checked=${this.report === i} @change=${() => (this.report = i)}>${t}</label>`)}
        </fieldset>
        <div class="note"><b>Note:</b> All e-mail reports require<br>Microsoft Outlook in order to work<br>properly.</div>
      </div>`;
  }
}

/* ---------- window ---------- */

@customElement("app-root")
export class AppRoot extends LitElement {
  @property({ type: Number }) zoom = 50;
  static styles = [reset, css`
    :host { display: block; background: #fff; color: #15428b; font: 12px/16px "DejaVu Sans Condensed", "DejaVu Sans", sans-serif; }
    .win { display: flex; flex-direction: column; height: 100vh; border: 1px solid #3b5a82; border-radius: 8px 8px 5px 5px; background: #bfdbff; box-shadow: inset 1px 0 0 #8fb0dc, inset -1px 0 0 #8fb0dc; }
    xl-title { flex: none; }
    .main { flex: 1; min-height: 0; display: flex; flex-direction: column; margin: 0 3px; }
    .fx { display: grid; grid-template-columns: 160px 85px 1fr 18px; height: 22px; margin: 3px 0 0; border: solid #6f9bc8; border-width: 1px 0; background: #fff; color: #000; flex: none; }
    .fx .name { display: flex; align-items: center; border-left: 1px solid #6f9bc8; }
    .fx .name input { width: 100%; min-width: 0; text-align: center; padding-right: 0; }
    .fx .name button { width: 20px; flex: none; display: flex; justify-content: center; }
    .fx .name .dn { fill: #000; width: 8px; }
    .pill { display: flex; align-items: center; justify-content: space-between; padding: 0 6px 0 5px; border: 1px solid #88a5cf; border-right-color: #6f93c0; border-radius: 11px 0 0 11px; background: linear-gradient(#dfe9f7, #b5cae8 60%, #a9c0e2); margin: -1px 0; }
    .pill i { width: 9px; height: 9px; border-radius: 50%; background: radial-gradient(circle at 35% 35%, #fff, #a9b3c4); }
    .pill button { font: italic bold 14px/16px "Liberation Serif", serif; color: #3f4f6c; }
    .pill small { font-size: 10px; }
    .fx > input { min-width: 0; padding: 0 4px; }
    .exp { display: flex; align-items: center; justify-content: center; background: linear-gradient(#eef4fc, #b9cfec); border-left: 1px solid #88a5cf; }
    .exp svg { width: 8px; height: 10px; }
    .band { height: 4px; flex: none; background: #dbe8f8; border-bottom: 1px solid #7ea5d0; }
    .work { flex: 1; min-height: 0; display: grid; grid-template-columns: 1fr 18px; }
    xl-sheet { min-height: 0; }
    .vs { display: flex; flex-direction: column; align-items: center; background: linear-gradient(90deg, #7393c2, #8eafd8 60%, #7d9ecb); padding: 1px 1px 6px; }
    .vs .split { width: 100%; height: 6px; background: #fff; border: 1px solid #7e9cc8; }
    .tri { width: 10px; height: 6px; display: block; fill: #3f5678; }
    .vs .up { margin: 6px 0; }
    .vs .th { width: 100%; height: 15px; border: 1px solid #7187ab; background: repeating-linear-gradient(#8290a8 0 1px, transparent 1px 3px) center / 9px 9px no-repeat, linear-gradient(90deg, #f5f7fa, #d5dbe5); }
    .vs .down { margin-top: auto; }
    .bottom { display: grid; grid-template-columns: 680px minmax(0, 1fr) 18px; height: 18px; flex: none; background: #a5c3ea; border-bottom: 1px solid #5b86bd; }
    .sheets { display: flex; align-items: stretch; overflow: hidden; border-top: 1px solid #8aa9d4; background: linear-gradient(#d5e5fa, #e6f0fd 40%, #b5cdf0 60%, #cde0f8); color: #21418c; }
    .nav { display: flex; align-items: center; justify-content: space-between; width: 71px; padding: 0 6px 0 7px; border-right: 1px solid #8aa9d4; flex: none; }
    .nav svg { width: 8px; height: 8px; fill: #15428b; display: block; }
    .sheets > button { white-space: nowrap; padding: 0 7px; flex: none; }
    .sheets > .first { width: 46px; border-right: 1px solid #8aa9d4; }
    .sheets > .on { width: 62px; font-weight: 700; background: linear-gradient(#fff 40%, #dfeafa); margin-top: -1px; }
    .slash { width: 14px; height: 17px; flex: none; display: block; }
    .hs { display: flex; align-items: center; justify-content: space-between; gap: 8px; background: linear-gradient(#86a7d4, #a3c0e6); padding: 0 2px 0 1px; }
    .hs .split { width: 4px; height: 14px; background: #fff; border: 1px solid #7e9cc8; flex: none; }
    .hs .tri2 { width: 6px; height: 10px; fill: #2f4668; flex: none; display: block; }
    .hs .th { width: 100px; height: 16px; flex: none; border: 1px solid #7187ab; background: repeating-linear-gradient(90deg, #8290a8 0 1px, transparent 1px 2px) center / 8px 7px no-repeat, linear-gradient(#fafbfd, #dbe1eb 50%, #cdd5e2); }
    .hs .sp { flex: 1; }
    .endcap { background: #7f9fcc; }
    .status { display: flex; align-items: stretch; height: 25px; flex: none; border-radius: 0 0 4px 4px; color: #1c2f78; background: linear-gradient(#e3eefc 0, #d0e1f8 12%, #bcd5f5 30%, #bcd5f5 60%, #d3e4f9 100%); }
    .cell { display: flex; align-items: center; padding: 0 8px 1px 10px; border-right: 1px solid #8fb0dc; box-shadow: 1px 0 0 #eff6ff; }
    .right { display: flex; align-items: center; margin-left: auto; width: 306px; padding-left: 5px; border-left: 1px solid #6b90c4; background: linear-gradient(#b9d2f3 0, #9fbfe9 35%, #7ea6dc 45%, #90b4e4 100%); border-radius: 0 0 4px 0; }
    .views { display: flex; border: 1px solid #5f83b8; border-radius: 2px; height: 21px; background: #bdd3f0; }
    .views button { width: 22px; display: flex; align-items: center; justify-content: center; }
    .views .on { background: linear-gradient(#fde3a5, #f7ae45); width: 22px; }
    .pct { width: 46px; text-align: center; padding-left: 2px; }
    .rd { width: 20px; height: 20px; flex: none; display: block; }
    .rd svg { width: 20px; height: 20px; display: block; }
    .zoom { appearance: none; flex: 1; min-width: 0; height: 18px; background: linear-gradient(#dbe9fb, #dbe9fb) center / 100% 1px no-repeat; }
    .zoom::-webkit-slider-thumb { appearance: none; width: 11px; height: 15px; background: linear-gradient(90deg, #fff 2px, #c9d9f2 2px 4px, #5f7fb0 4px 5px, #c9d9f2 5px 7px, #fff 7px); border: 1px solid #44597c; border-radius: 1px 1px 6px 6px; }
    .grip { width: 15px; height: 15px; align-self: flex-end; margin: 0 4px 2px 5px; fill: #4c6c9c; flex: none; }
  `];
  private slash(afterActive: boolean) {
    return html`<svg class="slash" viewBox="0 0 14 17" aria-hidden="true">${afterActive ? svg`<path d="M0 0h14L0 17z" fill="#f4f8fe"/>` : nothing}<path d="M0 17L14 0" stroke="#7f9bc6"/><path d="M0 13v4h3.500z" fill="#7f9bc6"/></svg>`;
  }
  render() {
    return html`<div class="win">
      <xl-title></xl-title>
      <div class="main">
        <xl-ribbon></xl-ribbon>
        <div class="fx">
          <div class="name"><input aria-label="Name box" value="P33"><button aria-label="Names">${arrow}</button></div>
          <div class="pill"><i></i><button aria-label="Insert function">f<small>x</small></button></div>
          <input aria-label="Formula">
          <button class="exp" aria-label="Expand formula bar"><svg viewBox="0 0 8 10"><path d="M1 1l3 3 3-3M1 5.500l3 3 3-3" stroke="#000" stroke-width="1.600" fill="none"/></svg></button>
        </div>
        <div class="band"></div>
        <div class="work">
          <xl-sheet></xl-sheet>
          <div class="vs"><div class="split"></div><svg class="tri up" viewBox="0 0 10 6"><path d="M0 6h10L5 0z"/></svg><div class="th"></div><svg class="tri down" viewBox="0 0 10 6"><path d="M0 0h10L5 6z"/></svg></div>
        </div>
        <div class="bottom">
          <div class="sheets">
            <div class="nav">
              <svg viewBox="0 0 8 8"><path d="M0 0h1.500v8H0zM7 0v8L2.500 4z"/></svg><svg viewBox="0 0 8 8"><path d="M6 0v8L1.500 4z"/></svg>
              <svg viewBox="0 0 8 8"><path d="M2 0v8l4.500-4z"/></svg><svg viewBox="0 0 8 8"><path d="M6.500 0H8v8H6.500zM1 0v8l4.500-4z"/></svg>
            </div>
            ${SHEETS.map((s, i) => html`${i > 1 ? this.slash(i === 2) : nothing}<button class=${classMap({ first: i === 0, on: i === 1 })}>${s}</button>`)}
          </div>
          <div class="hs"><div class="split"></div><svg class="tri2" viewBox="0 0 6 10"><path d="M6 0v10L0 5z"/></svg><div class="th"></div><div class="sp"></div><svg class="tri2" viewBox="0 0 6 10"><path d="M0 0v10l6-5z"/></svg><div class="split"></div></div>
          <div class="endcap"></div>
        </div>
      </div>
      <footer class="status">
        <div class="cell">Ready</div><div class="cell">${icon("macro")}</div>
        <div class="right">
          <div class="views"><button class="on" aria-label="Normal">${icon("normal")}</button><button aria-label="Page layout">${icon("pagelayout")}</button><button aria-label="Page break preview">${icon("pagebreak")}</button></div>
          <span class="pct">100%</span>
          <button class="rd" aria-label="Zoom out"><svg viewBox="0 0 20 20"><circle cx="10" cy="10" r="9" fill="#e8eef7" stroke="#44597c"/><path d="M5 10h10" stroke="#44597c" stroke-width="2.600"/></svg></button>
          <input class="zoom" type="range" aria-label="Zoom" min="0" max="100" .value=${String(this.zoom)}>
          <button class="rd" aria-label="Zoom in"><svg viewBox="0 0 20 20"><circle cx="10" cy="10" r="9" fill="#e8eef7" stroke="#44597c"/><path d="M5 10h10M10 5v10" stroke="#44597c" stroke-width="2.600"/></svg></button>
          <svg class="grip" viewBox="0 0 15 15"><path d="M10 1h3v3h-3zM5 6h3v3H5zM10 6h3v3h-3zM0 11h3v3H0zM5 11h3v3H5zM10 11h3v3h-3z"/></svg>
        </div>
      </footer>
    </div>`;
  }
}
